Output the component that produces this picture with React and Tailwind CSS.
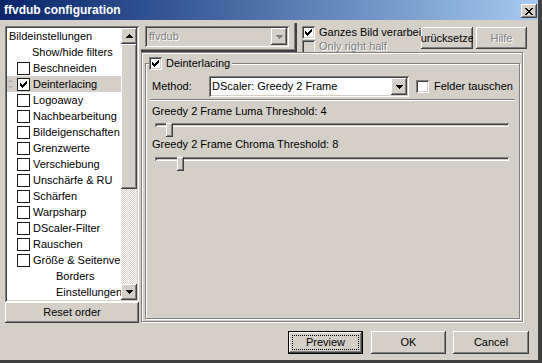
import React from "react";

const RAISED =
  "shadow-[inset_-1px_-1px_#404040,inset_1px_1px_#ffffff,inset_-2px_-2px_#808080,inset_2px_2px_#d4d0c8]";
const SUNKEN =
  "shadow-[inset_1px_1px_#808080,inset_-1px_-1px_#ffffff,inset_2px_2px_#404040,inset_-2px_-2px_#d4d0c8]";
const DIS = "text-[#808080] [text-shadow:1px_1px_0_#ffffff]";

function Check() {
  return (
    <svg width="7" height="7" viewBox="0 0 7 7" shapeRendering="crispEdges">
      <path
        fill="#000"
        d="M0 2h1v3H0zM1 3h1v3H1zM2 4h1v3H2zM3 3h1v3H3zM4 2h1v3H4zM5 1h1v3H5zM6 0h1v3H6z"
      />
    </svg>
  );
}

function Tri({ dir = "down", color = "#000" }) {
  const d =
    dir === "down"
      ? "M0 0h7v1H0zM1 1h5v1H1zM2 2h3v1H2zM3 3h1v1H3z"
      : "M3 0h1v1H3zM2 1h3v1H2zM1 2h5v1H1zM0 3h7v1H0z";
  return (
    <svg width="7" height="4" viewBox="0 0 7 4" shapeRendering="crispEdges">
      <path d={d} fill={color} />
    </svg>
  );
}

function CloseGlyph() {
  return (
    <svg width="8" height="7" viewBox="0 0 8 7" shapeRendering="crispEdges">
      <path
        fill="#000"
        d="M0 0h2v1H0zM6 0h2v1H6zM1 1h2v1H1zM5 1h2v1H5zM2 2h4v1H2zM3 3h2v1H3zM2 4h4v1H2zM1 5h2v1H1zM5 5h2v1H5zM0 6h2v1H0zM6 6h2v1H6z"
      />
    </svg>
  );
}

function DragHandle() {
  return (
    <svg width="5" height="10" viewBox="0 0 5 10" shapeRendering="crispEdges">
      <path fill="#b8b8b8" d="M2 0h1v1H2zM1 1h3v1H1zM0 2h5v1H0zM0 7h5v1H0zM1 8h3v1H1zM2 9h1v1H2z" />
    </svg>
  );
}

function Box3D({ checked, disabled }) {
  return (
    <div
      className={`w-[13px] h-[13px] shrink-0 flex items-center justify-center ${SUNKEN} ${
        disabled ? "bg-[#d4d0c8]" : "bg-white"
      }`}
    >
      {checked && <Check />}
    </div>
  );
}

function FlatBox({ checked }) {
  return (
    <div className="w-[13px] h-[13px] shrink-0 flex items-center justify-center border border-[#1a1a1a] bg-white">
      {checked && <Check />}
    </div>
  );
}

const listItems = [
  { t: "Bildeinstellungen", pl: "pl-[2px]" },
  { t: "Show/hide filters", pl: "pl-[25px]" },
  { t: "Beschneiden", cb: true },
  { t: "Deinterlacing", cb: true, on: true, sel: true },
  { t: "Logoaway", cb: true },
  { t: "Nachbearbeitung", cb: true },
  { t: "Bildeigenschaften", cb: true },
  { t: "Grenzwerte", cb: true },
  { t: "Verschiebung", cb: true },
  { t: "Unschärfe & RU", cb: true },
  { t: "Schärfen", cb: true },
  { t: "Warpsharp", cb: true },
  { t: "DScaler-Filter", cb: true },
  { t: "Rauschen", cb: true },
  { t: "Größe & Seitenverhältnis", cb: true },
  { t: "Borders", pl: "pl-[49px]" },
  { t: "Einstellungen", pl: "pl-[49px]" },
];

function ListRow({ it }) {
  if (!it.cb) {
    return (
      <div className={`h-[16px] shrink-0 flex items-center whitespace-nowrap ${it.pl}`}>
        {it.t}
      </div>
    );
  }
  return (
    <div
      className={`h-[16px] shrink-0 flex items-center whitespace-nowrap ${
        it.sel ? "bg-[#d4d0c8] pl-[1px]" : "pl-[10px]"
      }`}
    >
      {it.sel && (
        <div className="w-[5px] mr-[4px] flex items-center">
          <DragHandle />
        </div>
      )}
      <FlatBox checked={it.on} />
      <span className="ml-[3px]">{it.t}</span>
    </div>
  );
}

function Scrollbar() {
  return (
    <div className="w-[16px] flex flex-col shrink-0">
      <div className={`h-[16px] bg-[#d4d0c8] ${RAISED} flex items-center justify-center`}>
        <Tri dir="up" />
      </div>
      <div className={`h-[145px] bg-[#d4d0c8] ${RAISED}`} />
      <div className="flex-1 bg-[repeating-conic-gradient(#d4d0c8_0%_25%,#ffffff_0%_50%)] bg-[length:2px_2px]" />
      <div className={`h-[16px] bg-[#d4d0c8] ${RAISED} flex items-center justify-center`}>
        <Tri dir="down" />
      </div>
    </div>
  );
}

function Slider({ thumbLeft, trackTop }) {
  return (
    <div className="relative w-[354px] h-[14px] ml-[9px]">
      <div className={`h-[4px] bg-[#d4d0c8] ${SUNKEN} ${trackTop}`} />
      <div className={`absolute top-0 w-[7px] h-[14px] bg-[#d4d0c8] ${RAISED} ${thumbLeft}`} />
    </div>
  );
}

function Btn({ children, className = "", disabled }) {
  return (
    <div
      className={`bg-[#d4d0c8] ${RAISED} flex items-center justify-center whitespace-nowrap overflow-hidden ${
        disabled ? DIS : ""
      } ${className}`}
    >
      {children}
    </div>
  );
}

export default function App() {
  return (
    <div className="w-[542px] h-[363px] bg-[#d4d0c8] border-r-4 border-b-[3px] border-[#404040] overflow-hidden font-['Liberation_Sans',Arial,sans-serif] text-[11px] leading-[13px] text-black select-none">
      {/* Title bar */}
      <div className="h-[20px] flex items-center pl-[4px] pr-[1px] bg-linear-to-r from-[#0a246a] to-[#a6caf0]">
        <span className="flex-1 text-white font-bold text-[12px] leading-[14px]">
          ffvdub configuration
        </span>
        <div
          className={`w-[16px] h-[14px] mt-[2px] bg-[#d4d0c8] ${RAISED} flex items-center justify-center`}
        >
          <CloseGlyph />
        </div>
      </div>

      {/* Content */}
      <div className="flex pl-[5px] h-[303px]">
        {/* Left column */}
        <div className="w-[134px] pt-[6px] flex flex-col shrink-0">
          <div className={`h-[276px] bg-white ${SUNKEN} p-[2px] flex`}>
            <div className="w-[114px] overflow-hidden flex flex-col">
              {listItems.map((it) => (
                <ListRow key={it.t} it={it} />
              ))}
            </div>
            <Scrollbar />
          </div>
          <Btn className="h-[21px]">Reset order</Btn>
        </div>

        {/* Right column */}
        <div className="ml-[2px] w-[386px] flex flex-col shrink-0">
          {/* top row */}
          <div className="h-[32px] flex items-start">
            <div className="mt-[3px] w-[156px] h-[29px] border-r-2 border-b-2 border-[#404040] shadow-[inset_-1px_-1px_#808080] pl-[4px] pt-[3px]">
              <div className={`w-[144px] h-[21px] ${SUNKEN} bg-[#d4d0c8] p-[2px] flex`}>
                <div className={`flex-1 pl-[2px] flex items-center ${DIS}`}>ffvdub</div>
                <div className={`w-[16px] bg-[#d4d0c8] ${RAISED} flex items-center justify-center`}>
                  <Tri color="#808080" />
                </div>
              </div>
            </div>
            <div className="ml-[5px] mt-[6px] w-[119px] overflow-hidden flex flex-col whitespace-nowrap">
              <div className="h-[14px] flex items-start">
                <Box3D checked />
                <span className="ml-[4px]">Ganzes Bild verarbeiten</span>
              </div>
              <div className="h-[14px] flex items-start">
                <Box3D disabled />
                <span className={`ml-[4px] ${DIS}`}>Only right half</span>
              </div>
            </div>
            <Btn className="mt-[7px] w-[52px] h-[22px]">Zurücksetzen</Btn>
            <Btn className="ml-[3px] mt-[7px] w-[51px] h-[22px]" disabled>
              Hilfe
            </Btn>
          </div>

          {/* frame */}
          <div className="w-[382px] h-[270px] border border-[#808080] shadow-[inset_1px_1px_#ffffff,1px_1px_#ffffff] pl-[3px] pt-[10px]">
            <div className="relative w-[375px] h-[256px] border border-[#808080] shadow-[inset_1px_1px_#ffffff,1px_1px_#ffffff]">
              {/* legend */}
              <div className="absolute left-[3px] -top-[7px] flex items-center bg-[#d4d0c8] pr-[2px]">
                <Box3D checked />
                <span className="ml-[4px]">Deinterlacing</span>
              </div>

              {/* Method row */}
              <div className="mt-[12px] h-[21px] flex items-center pl-[6px]">
                <span className="w-[57px]">Method:</span>
                <div className={`w-[200px] h-[21px] ${SUNKEN} bg-white p-[2px] flex`}>
                  <div className="flex-1 pl-[1px] flex items-center">DScaler: Greedy 2 Frame</div>
                  <div className={`w-[16px] bg-[#d4d0c8] ${RAISED} flex items-center justify-center`}>
                    <Tri />
                  </div>
                </div>
                <div className="ml-[7px]">
                  <Box3D />
                </div>
                <span className="ml-[5px]">Felder tauschen</span>
              </div>

              {/* separator */}
              <div className="mt-[2px] ml-[4px] w-[365px] h-[2px] border-t border-[#808080] bg-white" />

              <div className="mt-[4px] pl-[6px] h-[13px]">Greedy 2 Frame Luma Threshold: 4</div>
              <div className="mt-[4px]">
                <Slider thumbLeft="left-[11px]" trackTop="mt-[5px]" />
              </div>
              <div className="mt-[1px] pl-[6px] h-[13px]">Greedy 2 Frame Chroma Threshold: 8</div>
              <div className="mt-[3px]">
                <Slider thumbLeft="left-[22px]" trackTop="mt-[6px]" />
              </div>
            </div>
          </div>
        </div>
      </div>

      {/* Bottom buttons */}
      <div className="mt-[8px] h-[23px] flex pl-[288px]">
        <div className={`w-[75px] h-[23px] border border-black bg-[#d4d0c8] ${RAISED} p-[3px]`}>
          <div className="w-full h-full border border-dotted border-black flex items-center justify-center">
            Preview
          </div>
        </div>
        <Btn className="ml-[8px] w-[75px] h-[23px]">OK</Btn>
        <Btn className="ml-[7px] w-[76px] h-[23px]">Cancel</Btn>
      </div>
    </div>
  );
}
